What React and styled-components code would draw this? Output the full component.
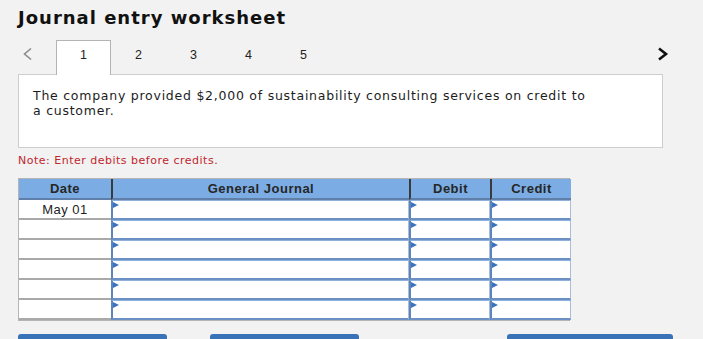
import React from 'react';
import styled, { createGlobalStyle } from 'styled-components';

const GlobalStyle = createGlobalStyle`
  html, body {
    margin: 0;
    padding: 0;
    background: #f2f2f2;
  }
  body {
    font-family: 'DejaVu Sans', Verdana, sans-serif;
    color: #1a1a1a;
    overflow: hidden;
  }
`;

const Page = styled.div`
  width: 703px;
  height: 339px;
  padding: 7px 0 0 18px;
  box-sizing: border-box;
  overflow: hidden;
`;

const Title = styled.h1`
  margin: 0;
  font-size: 18px;
  letter-spacing: 1px;
  font-weight: bold;
  line-height: 22px;
  color: #111;
`;

const TabBar = styled.div`
  display: flex;
  align-items: stretch;
  height: 34px;
  margin-top: 11px;
  width: 651px;
`;

const Arrow = styled.div`
  width: 38px;
  display: flex;
  align-items: flex-start;
  justify-content: ${(p) => (p.$right ? 'flex-end' : 'flex-start')};
  padding: 7px 0 0 4px;
  box-sizing: border-box;
`;

const Tab = styled.div`
  width: 55px;
  box-sizing: border-box;
  display: flex;
  align-items: center;
  justify-content: center;
  padding-bottom: 6px;
  font-family: 'Liberation Sans', Arial, sans-serif;
  font-size: 12.5px;
  color: #222;
  background: ${(p) => (p.$active ? '#fff' : 'transparent')};
  border: 1px solid ${(p) => (p.$active ? '#b4b4b4' : 'transparent')};
  border-bottom: none;
  margin-bottom: -1px;
  position: relative;
  z-index: 1;
`;

const Spacer = styled.div`
  flex: 1;
`;

const Prompt = styled.div`
  width: 645px;
  height: 74px;
  box-sizing: border-box;
  background: #fff;
  border: 1px solid #cdcdcd;
  padding: 13px 14px;
  font-size: 12.5px;
  letter-spacing: 0.75px;
  line-height: 15px;
  color: #1c1c1c;
`;

const Note = styled.div`
  margin-top: 6px;
  font-size: 11px;
  letter-spacing: 0.5px;
  line-height: 13px;
  color: #c0262c;
`;

const Grid = styled.div`
  margin-top: 11px;
  display: grid;
  grid-template-columns: 92px 298px 81px 81px;
  grid-template-rows: 21px repeat(6, 20px);
  width: 552px;
  box-sizing: border-box;
  border: 1px solid #b5b5b5;
  border-right: 1px solid #9a9a9a;
  background: #fff;
`;

const Head = styled.div`
  background: #7badE4;
  display: flex;
  align-items: center;
  justify-content: center;
  font-family: 'Liberation Sans', Arial, sans-serif;
  font-weight: bold;
  font-size: 13px;
  letter-spacing: 0.5px;
  color: #262626;
  border-left: ${(p) => (p.$first ? 'none' : '2px solid #3a3a3a')};
  border-bottom: 2px solid #5f7fa8;
  box-sizing: border-box;
`;

const DateCell = styled.div`
  box-sizing: border-box;
  border-bottom: 2px solid #a9a9a9;
  display: flex;
  align-items: center;
  justify-content: center;
  font-family: 'Liberation Sans', Arial, sans-serif;
  font-size: 13px;
  letter-spacing: 0.5px;
  color: #222;
  background: #fff;
`;

const InputCell = styled.div`
  position: relative;
  box-sizing: border-box;
  background: #fff;
  border-left: 2px solid #5e84b9;
  border-top: 1px solid #8fb0da;
  border-bottom: 2px solid #6b90c4;
  border-right: 1px solid #a9bedb;
`;

const Flag = styled.span`
  position: absolute;
  top: 1px;
  left: 0;
  width: 0;
  height: 0;
  border-top: 3px solid transparent;
  border-bottom: 3px solid transparent;
  border-left: 6px solid #3a74c0;
`;

const Buttons = styled.div`
  display: flex;
  margin-top: 13px;
`;

const Button = styled.div`
  width: ${(p) => p.$w}px;
  margin-right: ${(p) => p.$gap}px;
  height: 20px;
  background: #3a72b8;
  border-radius: 3px 3px 0 0;
`;

const Chevron = ({ dir }) => (
  <svg width="12" height="14" viewBox="0 0 12 14">
    {dir === 'left' ? (
      <polyline points="9,1.5 2.5,7 9,12.5" fill="none" stroke="#8a8a8a" strokeWidth="1.6" />
    ) : (
      <polyline points="2,1.5 9,7 2,12.5" fill="none" stroke="#111" strokeWidth="2.6" />
    )}
  </svg>
);

const rows = ['May 01', '', '', '', '', ''];

const App = () => (
  <>
    <GlobalStyle />
    <Page>
      <Title>Journal entry worksheet</Title>
      <TabBar>
        <Arrow><Chevron dir="left" /></Arrow>
        {[1, 2, 3, 4, 5].map((n) => (
          <Tab key={n} $active={n === 1}>{n}</Tab>
        ))}
        <Spacer />
        <Arrow $right><Chevron dir="right" /></Arrow>
      </TabBar>
      <Prompt>
        The company provided $2,000 of sustainability consulting services on credit to
        <br />
        a customer.
      </Prompt>
      <Note>Note: Enter debits before credits.</Note>
      <Grid>
        <Head $first>Date</Head>
        <Head>General Journal</Head>
        <Head>Debit</Head>
        <Head>Credit</Head>
        {rows.map((d, i) => (
          <React.Fragment key={i}>
            <DateCell>{d}</DateCell>
            <InputCell><Flag /></InputCell>
            <InputCell><Flag /></InputCell>
            <InputCell><Flag /></InputCell>
          </React.Fragment>
        ))}
      </Grid>
      <Buttons>
        <Button $w={149} $gap={43} />
        <Button $w={149} $gap={148} />
        <Button $w={166} $gap={0} />
      </Buttons>
    </Page>
  </>
);

export default App;
